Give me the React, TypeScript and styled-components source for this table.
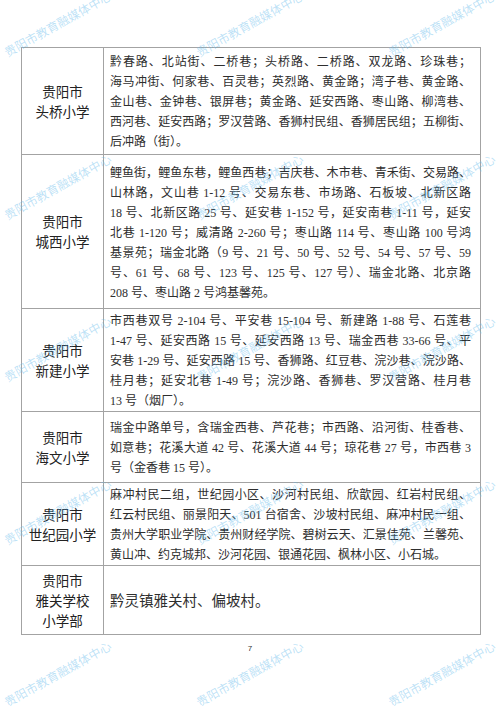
import styled, { createGlobalStyle } from 'styled-components'

interface SchoolRow {
  name: string[]
  lines: string[]
  height: number
  big?: boolean
}

const rows: SchoolRow[] = [
  {
    name: ['贵阳市', '头桥小学'],
    height: 108,
    lines: [
      '黔春路、北站街、二桥巷；头桥路、二桥路、双龙路、珍珠巷；',
      '海马冲街、何家巷、百灵巷；英烈路、黄金路；湾子巷、黄金路、',
      '金山巷、金钟巷、银屏巷；黄金路、延安西路、枣山路、柳湾巷、',
      '西河巷、延安西路；罗汉营路、香狮村民组、香狮居民组；五柳街、',
      '后冲路（街）。',
    ],
  },
  {
    name: ['贵阳市', '城西小学'],
    height: 155,
    lines: [
      '鲤鱼街，鲤鱼东巷，鲤鱼西巷；吉庆巷、木市巷、青禾街、交易路、',
      '山林路，文山巷 1-12 号、交易东巷、市场路、石板坡、北新区路',
      '18 号、北新区路 25 号、延安巷 1-152 号，延安南巷 1-11 号，延安',
      '北巷 1-120 号；威清路 2-260 号；枣山路 114 号、枣山路 100 号鸿',
      '基景苑；瑞金北路（9 号、21 号、50 号、52 号、54 号、57 号、59',
      '号、61 号、68 号、123 号、125 号、127 号）、瑞金北路、北京路',
      '208 号、枣山路 2 号鸿基馨苑。',
    ],
  },
  {
    name: ['贵阳市', '新建小学'],
    height: 101,
    lines: [
      '市西巷双号 2-104 号、平安巷 15-104 号、新建路 1-88 号、石莲巷',
      '1-47 号、延安西路 15 号、延安西路 13 号、瑞金西巷 33-66 号、平',
      '安巷 1-29 号、延安西路 15 号、香狮路、红豆巷、浣沙巷、浣沙路、',
      '桂月巷；延安北巷 1-49 号；浣沙路、香狮巷、罗汉营路、桂月巷',
      '13 号（烟厂）。',
    ],
  },
  {
    name: ['贵阳市', '海文小学'],
    height: 72,
    lines: [
      '瑞金中路单号，含瑞金西巷、芦花巷；市西路、沿河街、桂香巷、',
      '如意巷；花溪大道 42 号、花溪大道 44 号；琼花巷 27 号，市西巷 3',
      '号（金香巷 15 号）。',
    ],
  },
  {
    name: ['贵阳市', '世纪园小学'],
    height: 84,
    lines: [
      '麻冲村民二组，世纪园小区、沙河村民组、欣歆园、红岩村民组、',
      '红云村民组、丽景阳天、501 台宿舍、沙坡村民组、麻冲村民一组、',
      '贵州大学职业学院、贵州财经学院、碧树云天、汇景佳苑、兰馨苑、',
      '黄山冲、约克城邦、沙河花园、银通花园、枫林小区、小石城。',
    ],
  },
  {
    name: ['贵阳市', '雅关学校', '小学部'],
    height: 70,
    big: true,
    lines: ['黔灵镇雅关村、偏坡村。'],
  },
]

const GlobalStyle = createGlobalStyle`
  html, body {
    margin: 0;
    padding: 0;
    background: #ffffff;
  }
  body {
    font-family: "Liberation Serif", "Noto Sans CJK SC", serif;
  }
`

export default function App() {
  return (
    <Page>
      <GlobalStyle />
      <Table>
        <tbody>
          {rows.map((row, i) => (
            <tr key={i}>
              <NameCell $height={row.height}>
                {row.name.map((n) => (
                  <div key={n}>{n}</div>
                ))}
              </NameCell>
              <AreaCell $big={row.big}>
                {row.lines.map((line, j) => (
                  <Line key={j} $fill={j < row.lines.length - 1}>
                    {line}
                  </Line>
                ))}
              </AreaCell>
            </tr>
          ))}
        </tbody>
      </Table>
      <PageNumber>7</PageNumber>
      <Watermarks>
        {Array.from({ length: 15 }).map((_, i) => (
          <Mark key={i}>
            <span>贵阳市教育融媒体中心</span>
          </Mark>
        ))}
      </Watermarks>
    </Page>
  )
}

const Page = styled.div`
  position: relative;
  width: 500px;
  height: 706px;
  overflow: hidden;
  padding-top: 47px;
  box-sizing: border-box;
  background: #fff;
`

const Table = styled.table`
  margin-left: 21px;
  width: 460px;
  border-collapse: collapse;
  table-layout: fixed;
  border: 1px solid #a3a3a3;
  td {
    border: 1px solid #a3a3a3;
    vertical-align: middle;
  }
`

const NameCell = styled.td<{ $height: number }>`
  width: 82px;
  height: ${({ $height }) => $height - 1}px;
  box-sizing: border-box;
  padding: 3px 0 0 0;
  text-align: center;
  font-size: 13.5px;
  line-height: 20px;
  color: #222;
  font-weight: 400;
`

const AreaCell = styled.td<{ $big?: boolean }>`
  padding: 2px 9px 0 6px;
  font-size: ${({ $big }) => ($big ? '14.5px' : '12px')};
  line-height: 20px;
  color: #2e2e2e;
`

const Line = styled.div<{ $fill: boolean }>`
  white-space: nowrap;
  text-align: ${({ $fill }) => ($fill ? 'justify' : 'left')};
  text-align-last: ${({ $fill }) => ($fill ? 'justify' : 'left')};
`

const PageNumber = styled.div`
  margin-top: 9px;
  text-align: center;
  font-family: "Liberation Sans", sans-serif;
  font-size: 8px;
  line-height: 10px;
  color: #333;
`

const Watermarks = styled.div`
  position: absolute;
  inset: 0;
  pointer-events: none;
  display: grid;
  grid-template-columns: repeat(3, 192px);
  grid-auto-rows: 162.5px;
  padding: 46px 0 0 8px;
`

const Mark = styled.div`
  height: 12px;
  span {
    display: block;
    width: max-content;
    font-family: "Noto Sans CJK SC", sans-serif;
    font-size: 12px;
    line-height: 12px;
    color: rgba(95, 185, 235, 0.42);
    transform-origin: 0 100%;
    transform: rotate(-29deg);
  }
`
